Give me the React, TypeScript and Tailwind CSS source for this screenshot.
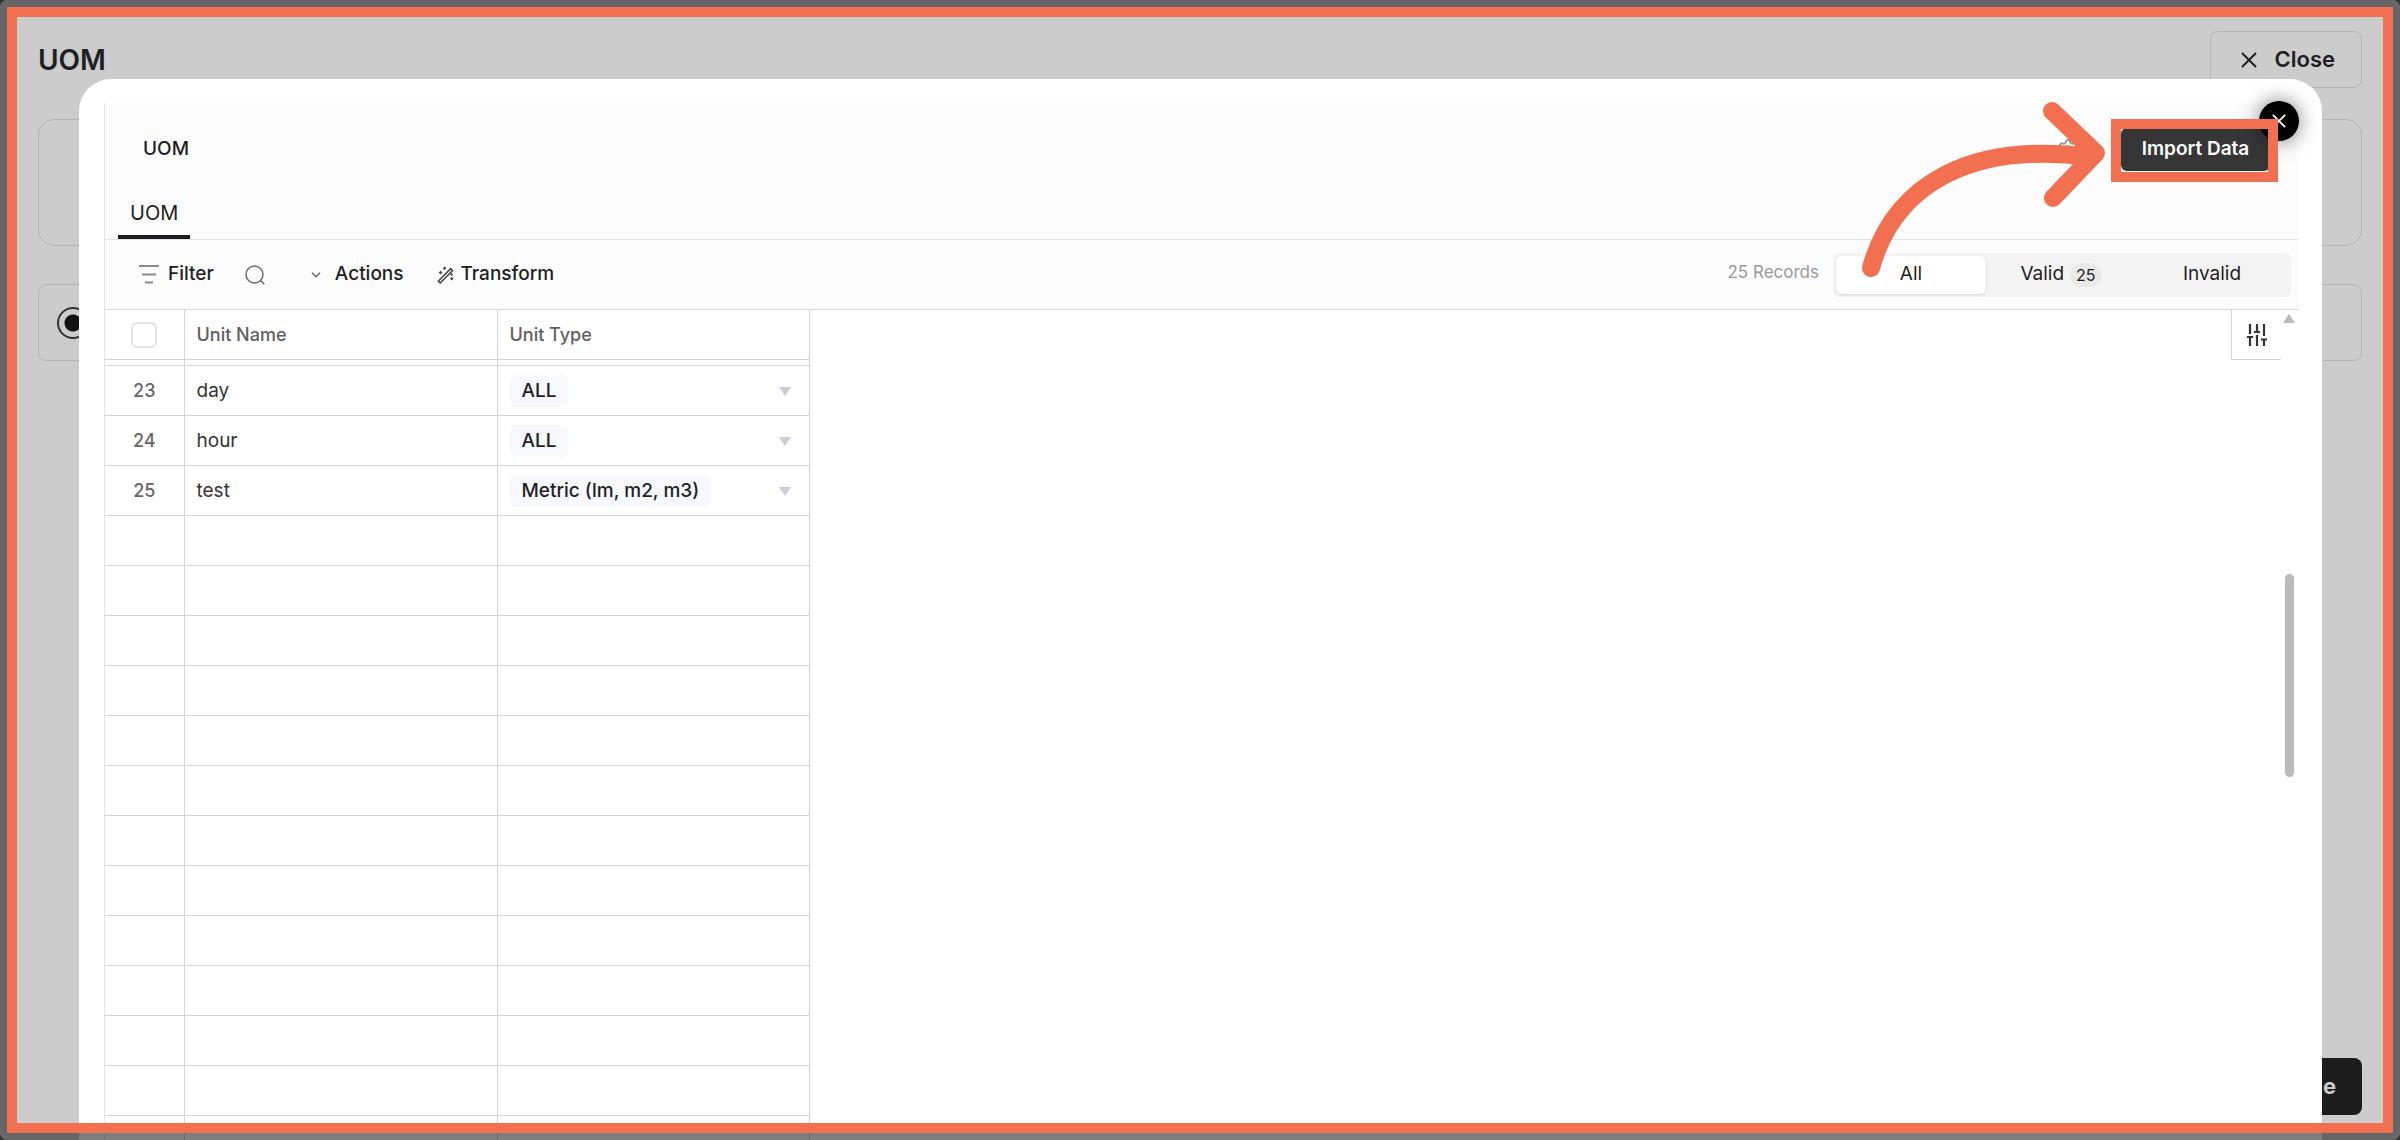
import React from 'react';
import { Settings } from 'lucide-react';

type Unit = { n: number; name: string; type: string };

const units: Unit[] = [
  { n: 23, name: 'day', type: 'ALL' },
  { n: 24, name: 'hour', type: 'ALL' },
  { n: 25, name: 'test', type: 'Metric (lm, m2, m3)' },
];

const emptyRows = Array.from({ length: 13 }, (_, i) => i);

function CrossIcon({ className }: { className: string }) {
  return (
    <svg viewBox="0 0 16 16" className={className} fill="none" stroke="currentColor" strokeWidth="2" aria-hidden="true">
      <path d="M1 1 15 15M15 1 1 15" />
    </svg>
  );
}

function FilterIcon() {
  return (
    <svg viewBox="0 0 20 20" className="size-5 text-[#8a8a8a]" fill="none" stroke="currentColor" strokeWidth="2" aria-hidden="true">
      <path d="M0 1H20M3 9.5H17M6 17.5H14" />
    </svg>
  );
}

function SearchIcon() {
  return (
    <svg viewBox="0 0 20 20" className="size-5 text-[#6b6b6b]" fill="none" stroke="currentColor" strokeWidth="1.5" aria-hidden="true">
      <circle cx="9.5" cy="9.5" r="8.5" />
      <path d="M15.5 15.5 19.3 19.3" />
    </svg>
  );
}

function WandIcon() {
  return (
    <svg viewBox="0 0 18 18" className="size-[18px] text-[#444]" fill="none" stroke="currentColor" strokeWidth="1.5" aria-hidden="true">
      <path d="M1.2 15.2 13.6 2.6 15.6 4.6 3.2 17Z" />
      <g fill="currentColor" stroke="none">
        <path d="M3.5 4.8 5.3 6.6 3.5 8.4 1.7 6.6ZM7.6.4 9.4 2.2 7.6 4 5.8 2.2ZM14.5 7 16 8.5 14.5 10 13 8.5ZM14.8 11 16.6 12.8 14.8 14.6 13 12.8Z" />
      </g>
    </svg>
  );
}

function SlidersIcon() {
  return (
    <svg viewBox="0 0 20 22" className="h-[22px] w-5 text-[#333]" fill="none" stroke="currentColor" strokeWidth="2.2" aria-hidden="true">
      <path d="M3 0V10M0 13H6M3 13V22M10 0V8M7 8H13M10 11V22M17 0V12M14 15.5H20M17 15.5V22" />
    </svg>
  );
}

function Toolbar() {
  return (
    <div className="flex h-[70px] items-center border-b border-[#d4d4d4] bg-[#fcfcfc] pr-[7px] pl-[34px] text-[19px] font-medium">
      <button type="button" className="flex items-center gap-[9px]">
        <FilterIcon />
        Filter
      </button>
      <button type="button" aria-label="Search" className="ml-[31px]">
        <SearchIcon />
      </button>
      <button type="button" className="ml-[46px] flex items-center gap-3.5">
        <svg viewBox="0 0 10 6" className="h-1.5 w-2.5 text-[#666]" fill="none" stroke="currentColor" strokeWidth="1.5" aria-hidden="true">
          <path d="M1 .8 5 4.8 9 .8" />
        </svg>
        Actions
      </button>
      <button type="button" className="ml-[33px] flex items-center gap-1.5">
        <WandIcon />
        Transform
      </button>
      <span className="ml-auto pb-1 text-[17px] font-normal text-[#9a9a9a]">25 Records</span>
      <div className="ml-3.5 flex h-[44px] items-center rounded-md bg-[#f3f3f3] p-[3px] font-normal">
        <button type="button" className="h-[38px] w-[150px] rounded-md bg-white shadow">All</button>
        <button type="button" className="flex h-[38px] w-[150px] items-center justify-center gap-1.5">
          Valid
          <span className="rounded-full bg-[#e9e9e9] px-1.5 text-base/6">25</span>
        </button>
        <button type="button" className="h-[38px] w-[152px]">Invalid</button>
      </div>
    </div>
  );
}

function UnitTable() {
  return (
    <table className="w-[704px] table-fixed border-collapse text-left">
      <colgroup>
        <col className="w-[79px]" />
        <col className="w-[313px]" />
        <col className="w-[312px]" />
      </colgroup>
      <thead>
        <tr className="h-[49px] border-b border-[#d4d4d4] text-[#5f5f5f]">
          <th scope="col" className="border-r border-[#d4d4d4] pt-0.5">
            <input type="checkbox" aria-label="Select all rows" className="mx-auto block size-[26px] appearance-none rounded-md border-2 border-[#e2e2e2] bg-white" />
          </th>
          <th scope="col" className="border-r border-[#d4d4d4] px-3 pt-0.5 text-lg font-medium">Unit Name</th>
          <th scope="col" className="border-r border-[#d4d4d4] px-3 pt-0.5 text-lg font-medium">Unit Type</th>
        </tr>
      </thead>
      <tbody>
        <tr className="h-1.5 border-b border-[#d4d4d4]">
          <td className="border-r border-[#d4d4d4]" />
          <td className="border-r border-[#d4d4d4]" />
          <td className="border-r border-[#d4d4d4]" />
        </tr>
        {units.map((u) => (
          <tr key={u.n} className="h-[50px] border-b border-[#d4d4d4] text-[19px]">
            <td className="border-r border-[#d4d4d4] pt-0.5 text-center text-lg font-medium text-[#666]">{u.n}</td>
            <td className="border-r border-[#d4d4d4] px-3 pt-0.5 text-[#333]">{u.name}</td>
            <td className="border-r border-[#d4d4d4] pt-0.5 pr-[18px] pl-3">
              <div className="flex items-center justify-between">
                <span className="rounded-md bg-[#f7f8fc] px-3 text-[19px]/8 font-medium">{u.type}</span>
                <svg viewBox="0 0 12 9" className="h-[9px] w-3 fill-[#c9cdd9]" aria-hidden="true">
                  <path d="M0 0H12L6 9Z" />
                </svg>
              </div>
            </td>
          </tr>
        ))}
        {emptyRows.map((i) => (
          <tr key={i} className="h-[50px] border-b border-[#d4d4d4]">
            <td className="border-r border-[#d4d4d4]" />
            <td className="border-r border-[#d4d4d4]" />
            <td className="border-r border-[#d4d4d4]" />
          </tr>
        ))}
      </tbody>
    </table>
  );
}

function ImportDialog() {
  return (
    <section role="dialog" aria-label="UOM import" className="absolute top-[79px] right-[78px] -bottom-10 left-[79px] overflow-hidden rounded-t-[32px] bg-white pt-6 pr-6 pl-[25px]">
      <div className="border-l border-[#e3e3ea]">
        <header className="flex h-[92px] items-center gap-[42px] bg-[#fcfcfc] pr-7 pl-[38px]">
          <h2 className="mr-auto text-[19px] font-medium">UOM</h2>
          <button type="button" aria-label="Settings" className="text-[#999]">
            <Settings size={22} strokeWidth={2} />
          </button>
          <button type="button" className="h-[43px] w-[149px] rounded-md bg-[#363636] text-[19px] font-semibold text-white">Import Data</button>
        </header>
        <nav className="flex h-[45px] items-end border-b border-[#e3e3e3] bg-[#fcfcfc] pl-[13px]">
          <button type="button" className="h-[45px] border-b-4 border-[#1c1c20] px-3 pb-1 text-xl">UOM</button>
        </nav>
        <Toolbar />
        <div className="flex items-start justify-between">
          <UnitTable />
          <div className="flex">
            <button type="button" aria-label="Table settings" className="flex h-[50px] w-[50px] items-center justify-center border-b border-l border-[#d4d4d4]">
              <SlidersIcon />
            </button>
            <div className="mr-px flex w-4 flex-col items-center pt-1">
              <svg viewBox="0 0 12 9" className="h-[9px] w-3 fill-[#bababa]" aria-hidden="true">
                <path d="M6 0 12 9H0Z" />
              </svg>
              <div className="mt-[251px] h-[203px] w-[9px] rounded-full bg-[#bababa]" />
            </div>
          </div>
        </div>
      </div>
    </section>
  );
}

export default function App() {
  return (
    <div className="bg-[#333]">
      <main className="relative flex h-screen flex-col overflow-hidden rounded-lg bg-[#ccc] px-[38px] pt-[31px] font-['Inter','Liberation_Sans',sans-serif] text-[#1f1f23]">
        <header className="flex items-center justify-between">
          <h1 className="text-[28px] font-semibold">UOM</h1>
          <button type="button" className="flex h-[57px] items-center gap-[18px] rounded-lg border border-[#b4b4b4] pr-[26px] pl-[30px] text-[22px] font-semibold">
            <CrossIcon className="size-4" />
            Close
          </button>
        </header>
        <div className="mt-[31px] h-[127px] rounded-2xl border border-[#b4b4b4]" />
        <label className="mt-[38px] flex h-[77px] items-center rounded-lg border border-[#b4b4b4] pl-[18px]">
          <input type="radio" name="source" defaultChecked aria-label="UOM" className="size-8 appearance-none rounded-full border-2 border-[#333] bg-[radial-gradient(circle,#111_8px,transparent_9px)]" />
        </label>
        <button type="button" className="mt-auto mb-[25px] flex h-[57px] w-40 items-center justify-end self-end rounded-lg bg-[#1c1c1c] pr-[26px] text-[22px] font-bold text-[#ccc]">Continue</button>

        <ImportDialog />

        <button type="button" aria-label="Close dialog" className="absolute top-[101px] right-[101px] flex size-10 items-center justify-center rounded-full bg-black text-white shadow-[0_0_20px_rgba(0,0,0,0.5)]">
          <CrossIcon className="size-3.5" />
        </button>
        <div className="pointer-events-none absolute top-[119px] right-[122px] h-[63px] w-[167px] border-10 border-[#f26f50]" />
        <svg viewBox="0 0 260 190" className="pointer-events-none absolute top-[95px] right-[290px] h-[190px] w-[260px]" fill="none" stroke="#f26f50" strokeWidth="18" strokeLinecap="round" strokeLinejoin="round" aria-hidden="true">
          <path d="M21 173C44 90 120 46 240 62M202 16 246 58 203 103" />
        </svg>
        <div className="pointer-events-none absolute inset-[7px] border-10 border-[#f26f50] outline-8 outline-black/50" />
      </main>
    </div>
  );
}
